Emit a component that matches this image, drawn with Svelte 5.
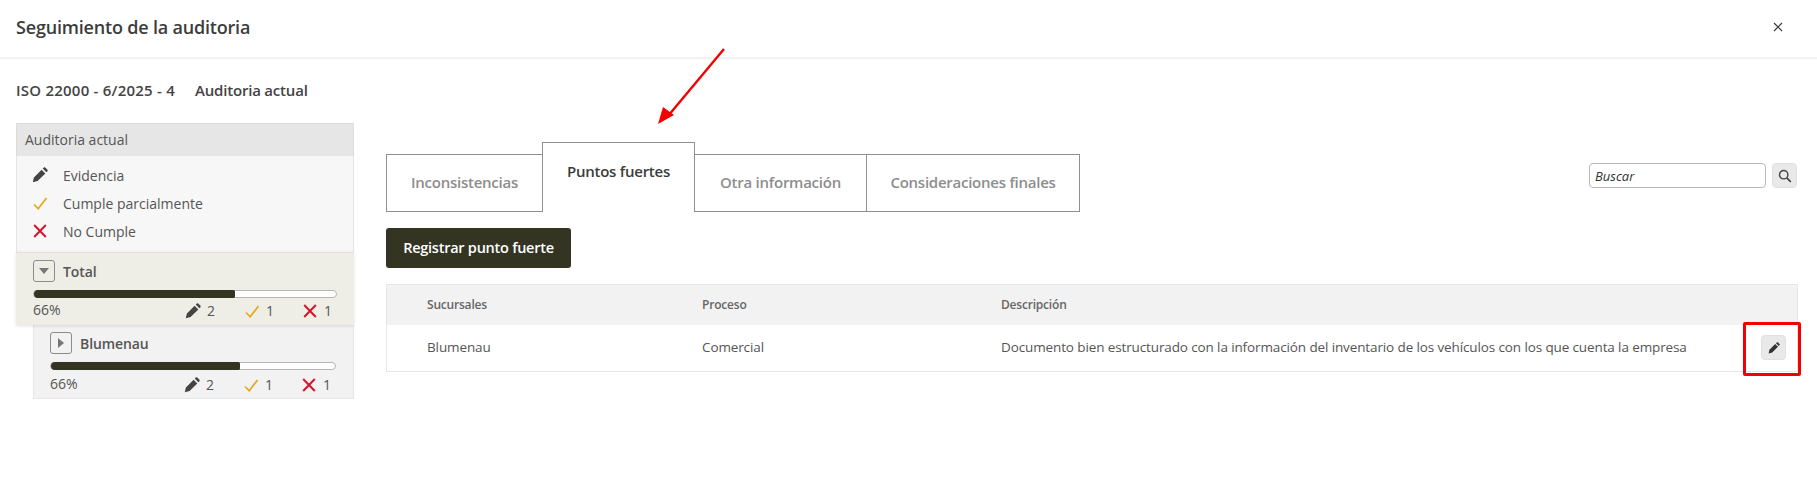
<script>
  const tabs = [
    { label: 'Inconsistencias', w: 157 },
    { label: 'Puntos fuertes', w: 153, active: true },
    { label: 'Otra información', w: 173 },
    { label: 'Consideraciones finales', w: 214 }
  ];
  const legend = [
    { icon: 'pencil', label: 'Evidencia' },
    { icon: 'check', label: 'Cumple parcialmente' },
    { icon: 'cross', label: 'No Cumple' }
  ];
  const paths = {
    pencil: 'M.8 15.2l1.1-4.8L9.6 2.7l3.7 3.7-7.7 7.7zM10.7 1.6l.9-.9c.6-.5 1.3-.5 1.8 0l1.9 1.9c.5.5.5 1.2 0 1.8l-.9.9z'
  };
</script>

{#snippet icon(name, size = 16)}
  {#if name === 'pencil'}
    <svg class="ic pencil" width={size} height={size} viewBox="0 0 16 16"><path d={paths.pencil} /></svg>
  {:else if name === 'check'}
    <svg class="ic" width={size} height={size} viewBox="0 0 16 16"><path d="M2 9.5l4.2 4.3L14.5 3" fill="none" stroke="#e6a817" stroke-width="1.7" /></svg>
  {:else}
    <svg class="ic" width={size} height={size} viewBox="0 0 16 16"><path d="M2.2 2l11.6 12M13.8 2L2.2 14" fill="none" stroke="#d8142c" stroke-width="2" /></svg>
  {/if}
{/snippet}

{#snippet stats(pct, fill)}
  <div class="bar"><div class="fill" style="width:{fill}%"></div></div>
  <div class="stats">
    <span class="pct">{pct}</span>
    <span class="stat s1">{@render icon('pencil')}2</span>
    <span class="stat s2">{@render icon('check')}1</span>
    <span class="stat s3">{@render icon('cross')}1</span>
  </div>
{/snippet}

<div class="page">
  <header class="top">
    <h1>Seguimiento de la auditoria</h1>
    <button class="close" aria-label="Cerrar">
      <svg width="10" height="10" viewBox="0 0 10 10"><path d="M1 1l8 8M9 1l-8 8" stroke="#333" stroke-width="1.1" fill="none" /></svg>
    </button>
  </header>

  <div class="sub"><span class="iso">ISO 22000 - 6/2025 - 4</span><span>Auditoria actual</span></div>

  <div class="main">
    <aside>
      <div class="panel-title">Auditoria actual</div>
      <ul class="legend">
        {#each legend as l}
          <li><span class="lg-ic">{@render icon(l.icon)}</span>{l.label}</li>
        {/each}
      </ul>
      <div class="total">
        <div class="row-head">
          <span class="toggle"><i class="tri down"></i></span>
          <strong>Total</strong>
        </div>
        {@render stats('66%', 66.5)}
      </div>
      <div class="branch">
        <div class="row-head">
          <span class="toggle"><i class="tri right"></i></span>
          <strong>Blumenau</strong>
        </div>
        {@render stats('66%', 66.5)}
      </div>
    </aside>

    <section>
      <div class="toolbar">
        <div class="tabs">
          {#each tabs as t}
            <div class="tab" class:active={t.active} style="width:{t.w}px">{t.label}</div>
          {/each}
        </div>
        <div class="search">
          <input placeholder="Buscar" />
          <button class="sq" aria-label="Buscar">
            <svg width="14" height="14" viewBox="0 0 14 14"><circle cx="5.7" cy="5.7" r="4.2" fill="none" stroke="#444" stroke-width="1.4" /><path d="M8.8 8.8l4 4" stroke="#444" stroke-width="1.7" /></svg>
          </button>
        </div>
      </div>

      <button class="primary">Registrar punto fuerte</button>

      <div class="table">
        <div class="tr th">
          <span class="c1">Sucursales</span><span class="c2">Proceso</span><span class="c3">Descripción</span>
        </div>
        <div class="tr td">
          <span class="c1">Blumenau</span><span class="c2">Comercial</span>
          <span class="c3">Documento bien estructurado con la información del inventario de los vehículos con los que cuenta la empresa</span>
          <button class="sq edit" aria-label="Editar">
            <svg width="12" height="12" viewBox="0 0 16 16"><path d={paths.pencil} fill="#333" /></svg>
          </button>
        </div>
      </div>
    </section>
  </div>

  <svg class="arrow" width="80" height="90" viewBox="0 0 80 90">
    <path d="M68 3L12 70" stroke="#f40000" stroke-width="2.4" fill="none" />
    <path d="M2 78l5-17 11 8z" fill="#f40000" />
  </svg>
  <div class="redbox"></div>
</div>

<style>
  :global(body) { margin: 0; background: #fff; }
  .page {
    position: relative;
    width: 1817px;
    height: 480px;
    overflow: hidden;
    font-family: "Open Sans", "Noto Sans", sans-serif;
    font-size: 13.5px;
    color: #555;
  }
  .top {
    height: 59px;
    box-sizing: border-box;
    border-bottom: 2px solid #f2f2f2;
    display: flex;
    align-items: center;
    justify-content: space-between;
    padding: 0 34px 3px 16px;
  }
  h1 { margin: 0; font-size: 18px; font-weight: 600; color: #3c3c3c; letter-spacing: -0.19px; }
  .close { border: 0; background: none; padding: 0; display: flex; }
  .sub {
    display: flex;
    gap: 20px;
    padding: 22px 16px 0;
    height: 42px;
    font-size: 15px;
    font-weight: 600;
    color: #444;
    line-height: 19px;
    letter-spacing: -0.2px;
  }
  .iso { letter-spacing: 0.23px; }
  .main { display: flex; padding: 0 19px 0 16px; margin-top: 0; }
  aside { width: 338px; flex: none; margin-right: 32px; }
  .panel-title {
    height: 32px;
    box-sizing: content-box;
    line-height: 32px;
    background: #e6e6e6;
    border: 1px solid #dcdcdc;
    border-bottom: 0;
    padding-left: 8px;
    font-size: 14px;
    color: #555;
  }
  .legend {
    list-style: none;
    margin: 0;
    padding: 5px 0 4px 15px;
    height: 87px;
    background: #f7f7f7;
    border-left: 1px solid #e4e4e4;
    border-right: 1px solid #e4e4e4;
  }
  .legend li { height: 28px; display: flex; align-items: center; font-size: 14px; }
  .lg-ic { width: 31px; display: flex; }
  .ic { display: block; flex: none; }
  .pencil path { fill: #444; }
  .total {
    position: relative;
    height: 73px;
    box-sizing: border-box;
    background: #eeeee7;
    border-top: 1px solid #e2e2da;
    padding: 7px 17px 0 17px;
    box-shadow: 0 1px 3px rgba(0,0,0,.12);
  }
  .branch {
    height: 74px;
    box-sizing: border-box;
    margin-left: 17px;
    background: #f2f2f2;
    border: 1px solid #e6e6e6;
    border-top: 0;
    padding: 7px 17px 0 16px;
  }
  .branch .stats { margin-top: 2px; }
  .row-head { display: flex; align-items: center; gap: 8px; height: 22px; }
  .row-head strong { font-weight: 600; font-size: 14px; color: #555; letter-spacing: -0.1px; }
  .toggle {
    width: 20px; height: 20px;
    border: 1px solid #8c8c8c;
    border-radius: 3px;
    display: flex; align-items: center; justify-content: center;
  }
  .tri { width: 0; height: 0; display: block; }
  .tri.down { border: 5px solid transparent; border-top: 6px solid #777; border-bottom: 0; }
  .tri.right { border: 5px solid transparent; border-left: 6px solid #777; border-right: 0; }
  .bar {
    height: 6px;
    margin-top: 8px;
    background: #fff;
    border: 1px solid #b5b5b5;
    border-radius: 5px;
  }
  .fill { height: 8px; margin-top: -1px; background: #333522; border-radius: 5px 2px 2px 5px; }
  .stats { position: relative; display: flex; align-items: center; height: 22px; margin-top: 0; font-size: 14px; }
  .stat { position: absolute; display: flex; align-items: center; gap: 6px; top: 3px; }
  .s1 { right: 122px; }
  .s2 { right: 63px; }
  .s3 { right: 5px; }
  section { flex: 1; min-width: 0; margin-top: -1px; }
  .toolbar { display: flex; justify-content: space-between; align-items: flex-start; height: 90px; padding-top: 20px; box-sizing: border-box; }
  .tabs { display: flex; align-items: flex-end; height: 70px; }
  .tab {
    height: 58px;
    box-sizing: border-box;
    border: 1px solid #8f8f8f;
    padding-bottom: 2px;
    display: flex; align-items: center; justify-content: center;
    font-weight: 600;
    font-size: 15px;
    color: #8d8d8d;
    letter-spacing: -0.25px;
    margin-right: -1px;
  }
  .tab.active {
    height: 70px;
    color: #3c3c3c;
    border-bottom: 0;
    padding-bottom: 14px;
    background: #fff;
    position: relative;
  }
  .search { display: flex; gap: 6px; padding-top: 21px; padding-right: 1px; }
  .search input {
    width: 177px; height: 25px; box-sizing: border-box;
    border: 1px solid #b8b8b8; border-radius: 4px;
    padding: 0 5px;
    font: italic 13px "Open Sans", sans-serif;
    color: #222;
    outline: 0;
  }
  .search input::placeholder { color: #333; opacity: 1; }
  .sq {
    width: 25px; height: 25px; padding: 0;
    background: #e9e9e9;
    border: 1px solid #e0e0e0;
    border-radius: 4px;
    display: flex; align-items: center; justify-content: center;
  }
  .primary {
    display: block;
    margin-top: 16px;
    width: 185px; height: 40px;
    background: #333522;
    border: 0; border-radius: 3px;
    color: #fff;
    font: 600 14.5px "Open Sans", sans-serif;
    letter-spacing: -0.25px;
    padding: 0 0 2px;
  }
  .table { margin: 16px 0 0 0; border: 1px solid #e6e6e6; }
  .tr { display: flex; align-items: center; position: relative; box-sizing: border-box; padding-bottom: 2px; }
  .th { height: 40px; background: #f2f2f2; font-size: 12px; font-weight: 600; color: #666; letter-spacing: -0.2px; }
  .td { height: 46px; font-size: 13.5px; letter-spacing: -0.12px; }
  .c1 { margin-left: 40px; width: 275px; flex: none; }
  .c2 { width: 299px; flex: none; }
  .c3 { flex: 1; }
  .edit { position: absolute; left: 1374px; top: 10px; }
  .arrow { position: absolute; left: 656px; top: 46px; }
  .redbox {
    position: absolute;
    left: 1743px; top: 322px;
    width: 58px; height: 54px;
    box-sizing: border-box;
    border: 3px solid #f40000;
    border-radius: 2px;
  }
</style>
